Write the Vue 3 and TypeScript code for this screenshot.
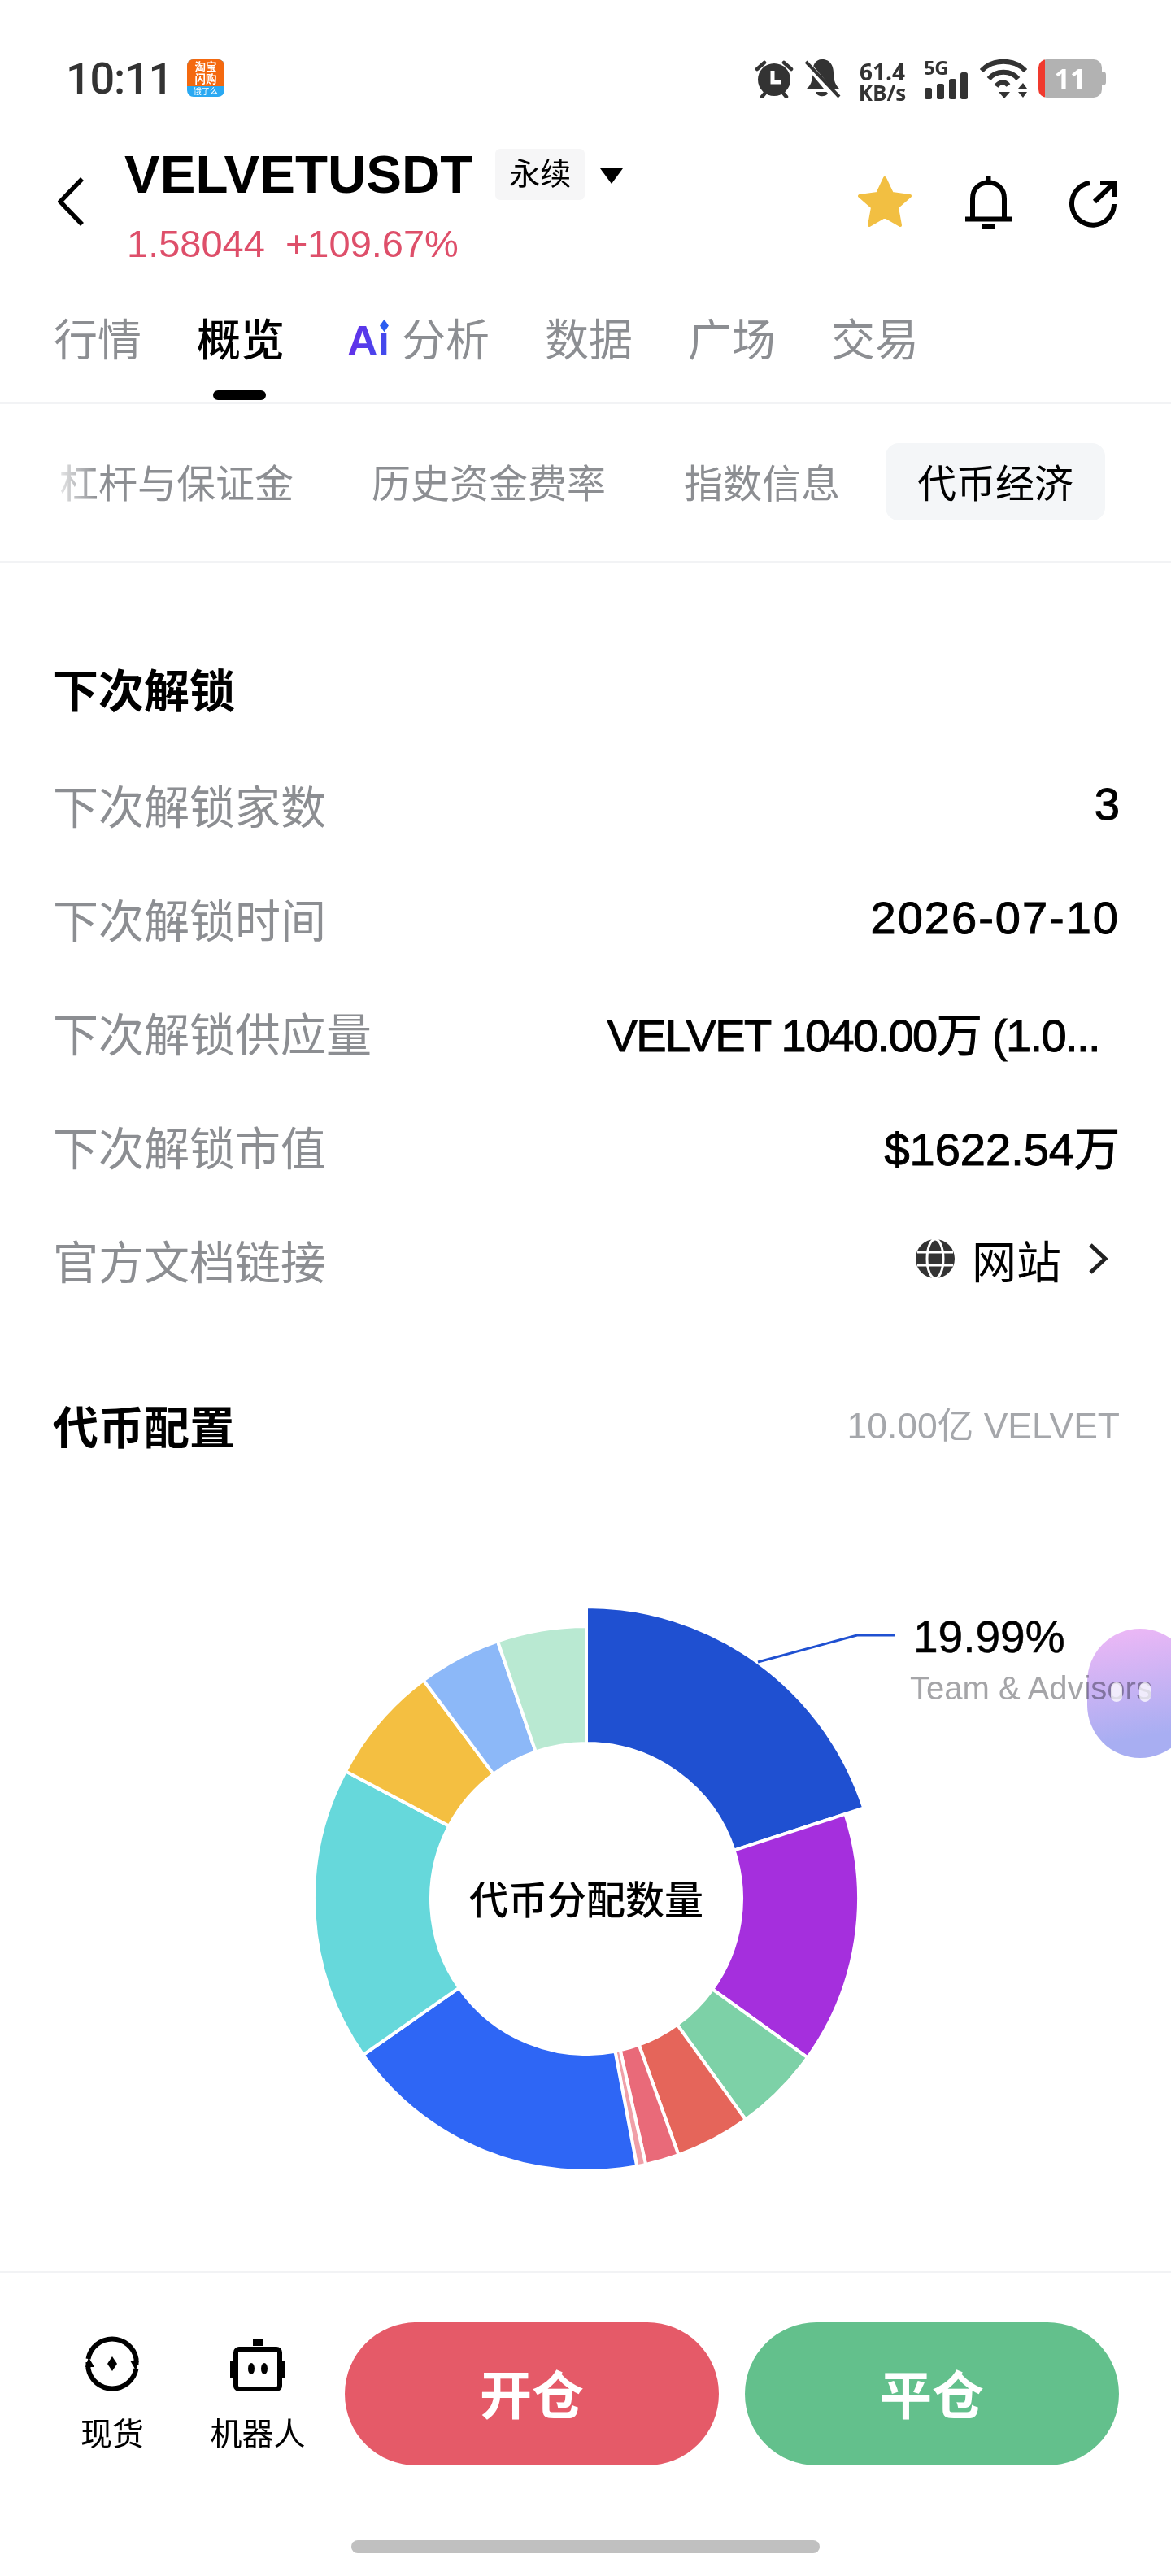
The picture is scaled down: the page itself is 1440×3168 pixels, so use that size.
<template>
  <div class="page">
    <div class="status">
      <span class="clock">10:11</span>
      <div class="app-badge">
        <div class="badge-top">淘宝<br />闪购</div>
        <div class="badge-bottom">饿了么</div>
      </div>
      <div class="status-right">
        <svg class="ic-alarm" width="48" height="48" viewBox="0 0 48 48">
          <circle cx="24" cy="25" r="20" fill="#333" />
          <path d="M3 12 L12 4 M45 12 L36 4 M9 46 L14 40 M39 46 L34 40" stroke="#333" stroke-width="4.5" stroke-linecap="round" />
          <path d="M22 14 V28 H32" fill="none" stroke="#fff" stroke-width="5" />
        </svg>
        <svg class="ic-mute" width="44" height="48" viewBox="0 0 44 48">
          <path d="M21 0 C31 0 35 8 35 17 C35 27 38 32 42 36 L2 36 C7 32 9 27 9 17 C9 8 12 0 21 0 Z" fill="#333" />
          <path d="M13 40 H29 C27 47 15 47 13 40 Z" fill="#333" />
          <path d="M-2 0 L40 50" stroke="#fff" stroke-width="8" />
          <path d="M1 3 L42 46" stroke="#333" stroke-width="4" />
        </svg>
        <div class="speed"><span>61.4</span><span class="unit">KB/s</span></div>
        <div class="net">
          <span class="five-g">5G</span>
          <svg width="54" height="34" viewBox="0 0 54 34">
            <rect x="1" y="19" width="9" height="14" rx="2.5" fill="#333" />
            <rect x="16" y="14" width="9" height="19" rx="2.5" fill="#333" />
            <rect x="31" y="8" width="9" height="25" rx="2.5" fill="#333" />
            <rect x="45" y="0" width="9" height="33" rx="2.5" fill="#333" />
          </svg>
        </div>
        <svg class="ic-wifi" width="58" height="48" viewBox="0 0 58 48">
          <path d="M2 14 C16 -1 42 -1 56 14" fill="none" stroke="#333" stroke-width="6" />
          <path d="M11 24 C20 13 38 13 47 24" fill="none" stroke="#333" stroke-width="6" />
          <path d="M20 33 C24 27 31 27 35 32" fill="none" stroke="#333" stroke-width="6" />
          <path d="M23 40 H37 L30 48 Z M47 36 L53 29 L58 36 Z M47 40 H58 L53 47 Z" fill="#333" />
        </svg>
        <div class="battery">
          <span>11</span>
        </div>
      </div>
    </div>

    <div class="header">
      <svg class="back" width="32" height="60" viewBox="0 0 32 60">
        <path d="M30 2 L3 30 L30 58" fill="none" stroke="#000" stroke-width="5.5" />
      </svg>
      <div class="symbol">
        <div class="symbol-top">
          <span class="pair">VELVETUSDT</span>
          <span class="perp">永续</span>
          <span class="caret"></span>
        </div>
        <div class="quote"><span>1.58044</span><span>+109.67%</span></div>
      </div>
      <div class="actions">
        <svg width="68" height="64" viewBox="0 0 68 64">
          <path d="M34 3 L43 22 L65 25 L49 39 L53 61 L34 50 L15 61 L19 39 L3 25 L25 22 Z" fill="#f2bf42" stroke="#f2bf42" stroke-width="4" stroke-linejoin="round" />
        </svg>
        <svg width="57" height="66" viewBox="0 0 57 66">
          <path d="M28.5 0 V8 M9 53 V28 C9 2 48 2 48 28 V53 M0 53.5 H57" fill="none" stroke="#000" stroke-width="6" />
          <rect x="20" y="60" width="17" height="6" fill="#000" />
        </svg>
        <svg class="share" width="58" height="58" viewBox="0 0 58 58">
          <path d="M25 3 A26 26 0 1 0 55 29" fill="none" stroke="#000" stroke-width="6" />
          <path d="M31 26 L54 4 M38 3 H55 V20" fill="none" stroke="#000" stroke-width="6" />
        </svg>
      </div>
    </div>

    <div class="tabs">
      <span
        v-for="tab in mainTabs"
        :key="tab.label"
        class="tab"
        :class="{ active: tab.active, 'has-ai': tab.ai }"
      >
        <span v-if="tab.ai" class="ai">Aı<i class="ai-dot"></i></span>{{ tab.label }}
        <i v-if="tab.active" class="tab-line"></i>
      </span>
    </div>

    <div class="subtabs">
      <span
        v-for="tab in subTabs"
        :key="tab"
        class="subtab"
        :class="{ current: tab === '代币经济' }"
      >{{ tab }}</span>
      <i class="fade"></i>
    </div>

    <div class="content">
      <div class="section-title first">下次解锁</div>
      <div v-for="row in rows" :key="row.label" class="row">
        <span class="row-label">{{ row.label }}</span>
        <span class="row-value" :class="row.cls">{{ row.value }}</span>
      </div>
      <div class="row">
        <span class="row-label">官方文档链接</span>
        <span class="link">
          <svg width="48" height="48" viewBox="0 0 48 48">
            <circle cx="24" cy="24" r="24" fill="#333" />
            <ellipse cx="24" cy="24" rx="10" ry="24" fill="none" stroke="#fff" stroke-width="3" />
            <path d="M2 16 H46 M2 32 H46" stroke="#fff" stroke-width="3" />
          </svg>
          <span class="link-text">网站</span>
          <svg width="26" height="38" viewBox="0 0 26 38">
            <path d="M4 2 L22 19 L4 36" fill="none" stroke="#222" stroke-width="5" />
          </svg>
        </span>
      </div>

      <div class="alloc-head">
        <span class="section-title">代币配置</span>
        <span class="total">10.00亿 VELVET</span>
      </div>

      <div class="chart">
        <svg width="1440" height="800" viewBox="0 0 1440 800">
          <path
            v-for="seg in segments"
            :key="seg.color"
            :d="seg.d"
            :fill="seg.color"
            stroke="#fff"
            stroke-width="4"
          />
          <path d="M932 146 L1054 113 H1101" fill="none" stroke="#1f50d1" stroke-width="3" />
        </svg>
        <div class="center-label">代币分配数量</div>
        <div class="callout">
          <div class="callout-num">19.99%</div>
          <div class="callout-name">Team &amp; Advisors</div>
        </div>
        <div class="bubble"></div>
        <i class="bubble-dot"></i>
        <i class="bubble-dot second"></i>
      </div>
    </div>

    <div class="footer">
      <div class="footer-main">
        <div class="mini">
          <svg width="68" height="68" viewBox="0 0 68 68">
            <path d="M4.5 28 A30 30 0 0 1 63.5 28 V36" fill="none" stroke="#000" stroke-width="6" />
            <path d="M63.5 40 A30 30 0 0 1 4.5 40 V32" fill="none" stroke="#000" stroke-width="6" />
            <path d="M56 30 L67 30 L63 42 Z M12 38 L1 38 L5 26 Z" fill="#000" />
            <path d="M34 25 L40 34 L34 43 L28 34 Z" fill="#000" />
          </svg>
          <span>现货</span>
        </div>
        <div class="mini">
          <svg width="68" height="68" viewBox="0 0 68 68">
            <rect x="28" y="3" width="13" height="9" fill="#000" />
            <rect x="7" y="16" width="54" height="49" rx="4" fill="none" stroke="#000" stroke-width="6" />
            <path d="M2 31 V51 M66 31 V51" stroke="#000" stroke-width="4" />
            <ellipse cx="26" cy="40" rx="4" ry="7" fill="#000" />
            <ellipse cx="42" cy="40" rx="4" ry="7" fill="#000" />
          </svg>
          <span>机器人</span>
        </div>
        <button class="trade open">开仓</button>
        <button class="trade close">平仓</button>
      </div>
      <div class="home-bar"></div>
    </div>
  </div>
</template>

<script setup lang="ts">
import { computed } from 'vue';

const mainTabs = [
  { label: '行情' },
  { label: '概览', active: true },
  { label: '分析', ai: true },
  { label: '数据' },
  { label: '广场' },
  { label: '交易' },
];

const subTabs = ['杠杆与保证金', '历史资金费率', '指数信息', '代币经济'];

const rows = [
  { label: '下次解锁家数', value: '3' },
  { label: '下次解锁时间', value: '2026-07-10', cls: 'wide' },
  { label: '下次解锁供应量', value: 'VELVET 1040.00万 (1.0...', cls: 'cut' },
  { label: '下次解锁市值', value: '$1622.54万' },
];

// end angle in degrees, clockwise from 12 o'clock
const slices = [
  { end: 71.9, color: '#1f50d1', big: true },
  { end: 125.7, color: '#a52fdd' },
  { end: 144.2, color: '#7dd1a7' },
  { end: 160.2, color: '#e5655a' },
  { end: 167.4, color: '#e96a79' },
  { end: 169.3, color: '#f0a0a8' },
  { end: 235, color: '#2e66f5' },
  { end: 297.9, color: '#66d8db' },
  { end: 323.3, color: '#f4bf41' },
  { end: 341, color: '#8cb8f8' },
  { end: 360, color: '#b9e9d2' },
];

const cx = 721;
const cy = 437;

function point(r: number, deg: number): string {
  const a = (deg * Math.PI) / 180;
  return `${(cx + r * Math.sin(a)).toFixed(2)} ${(cy - r * Math.cos(a)).toFixed(2)}`;
}

const segments = computed(() => {
  let start = 0;
  return slices.map((s) => {
    const outer = s.big ? 359 : 335;
    const inner = 191;
    const large = s.end - start > 180 ? 1 : 0;
    const d =
      `M${point(inner, start)} L${point(outer, start)} ` +
      `A${outer} ${outer} 0 ${large} 1 ${point(outer, s.end)} ` +
      `L${point(inner, s.end)} A${inner} ${inner} 0 ${large} 0 ${point(inner, start)} Z`;
    start = s.end;
    return { d, color: s.color };
  });
});
</script>

<style>
html,
body {
  margin: 0;
  background: #fff;
}
</style>

<style scoped>
.page {
  width: 1440px;
  height: 3168px;
  display: flex;
  flex-direction: column;
  overflow: hidden;
  background: #fff;
  font-family: "Liberation Sans", "Noto Sans CJK SC", sans-serif;
  color: #000;
}

.status {
  height: 145px;
  flex: none;
  display: flex;
  align-items: flex-start;
  padding: 73px 85px 0 81px;
  box-sizing: border-box;
  color: #333;
}

.clock {
  font-family: Roboto, sans-serif;
  font-weight: 500;
  font-size: 54px;
  line-height: 48px;
  letter-spacing: -1.2px;
}

.app-badge {
  margin-left: 18px;
  width: 46px;
  height: 46px;
  border-radius: 8px;
  overflow: hidden;
  background: #2aa9f2;
  color: #fff;
  text-align: center;
}

.badge-top {
  height: 33px;
  background: #f4690f;
  font-size: 13.5px;
  line-height: 15px;
  font-weight: 700;
  padding-top: 2px;
  box-sizing: border-box;
}

.badge-bottom {
  font-size: 10px;
  line-height: 13px;
}

.status-right {
  margin-left: auto;
  display: flex;
  align-items: flex-start;
}

.ic-mute {
  margin-left: 14px;
  overflow: hidden;
}

.speed {
  margin-left: 22px;
  width: 58px;
  display: flex;
  flex-direction: column;
  align-items: center;
  font-family: "Open Sans", sans-serif;
  font-weight: 700;
  font-size: 28px;
  line-height: 30px;
}

.speed .unit {
  font-size: 26px;
  line-height: 22px;
  font-weight: 700;
}

.net {
  margin-left: 22px;
  width: 54px;
  position: relative;
  height: 50px;
}

.five-g {
  display: block;
  font-family: "Open Sans", sans-serif;
  font-weight: 700;
  font-size: 24px;
  line-height: 22px;
  margin-top: -1px;
  letter-spacing: -0.5px;
}

.net svg {
  position: absolute;
  left: 0;
  top: 16px;
}

.ic-wifi {
  margin-left: 15px;
}

.battery {
  margin-left: 14px;
  width: 78px;
  height: 47px;
  border-radius: 10px;
  background: linear-gradient(90deg, #f03a2e 8px, #b2b2b2 8px);
  position: relative;
  color: #fff;
  font-family: "Open Sans", sans-serif;
  font-weight: 700;
  font-size: 34px;
  line-height: 47px;
  text-align: center;
}

.battery::after {
  content: "";
  position: absolute;
  right: -5px;
  top: 15px;
  width: 5px;
  height: 17px;
  border-radius: 0 4px 4px 0;
  background: #b2b2b2;
}

.header {
  height: 190px;
  flex: none;
  display: flex;
  align-items: flex-start;
  padding: 38px 67px 0 71px;
  box-sizing: border-box;
}

.back {
  margin-top: 35px;
  flex: none;
}

.symbol {
  margin-left: 49px;
}

.symbol-top {
  display: flex;
  align-items: flex-start;
}

.pair {
  font-weight: 700;
  font-size: 65.5px;
  line-height: 64px;
  margin-left: 1px;
}

.perp {
  margin-left: 28px;
  width: 110px;
  height: 63px;
  background: #f6f6f7;
  border-radius: 6px;
  font-size: 38px;
  line-height: 63px;
  text-align: center;
}

.caret {
  margin: 24px 0 0 19px;
  width: 0;
  height: 0;
  border-left: 14px solid transparent;
  border-right: 14px solid transparent;
  border-top: 19px solid #000;
}

.quote {
  margin-top: 28px;
  margin-left: 4px;
  display: flex;
  gap: 25px;
  font-size: 47px;
  line-height: 50px;
  color: #de4f6a;
}

.actions {
  margin-left: auto;
  margin-top: 33px;
  display: flex;
  align-items: flex-start;
  gap: 65px;
}

.share {
  margin: 6px 0 0 6px;
}

.tabs {
  height: 162px;
  flex: none;
  display: flex;
  gap: 68px;
  padding: 51px 0 0 66px;
  box-sizing: border-box;
  border-bottom: 2px solid #f2f3f5;
  font-size: 54px;
  line-height: 66px;
  color: #8c8e92;
}

.tab {
  position: relative;
  white-space: nowrap;
  display: flex;
}

.tab.active {
  color: #000;
  font-weight: 500;
}

.tab.has-ai {
  margin-left: 9px;
}

.tab-line {
  position: absolute;
  left: 20px;
  top: 94px;
  width: 65px;
  height: 12px;
  border-radius: 6px;
  background: #000;
}

.ai {
  position: relative;
  width: 67px;
  font-size: 52px;
  font-weight: 700;
  color: transparent;
  background: linear-gradient(100deg, #6a2be8, #2a5cf0);
  -webkit-background-clip: text;
  background-clip: text;
}

.ai-dot {
  position: absolute;
  left: 40px;
  top: 9px;
  width: 11px;
  height: 11px;
  background: #2a5cf0;
  transform: scaleX(0.7) rotate(45deg);
}

.subtabs {
  height: 195px;
  flex: none;
  position: relative;
  display: flex;
  align-items: flex-start;
  gap: 16px;
  padding: 48px 0 0 33px;
  box-sizing: border-box;
  border-bottom: 2px solid #f2f3f5;
  font-size: 48px;
  color: #8c8e92;
}

.subtab {
  height: 95px;
  line-height: 101px;
  padding: 0 40px;
  border-radius: 16px;
  white-space: nowrap;
}

.subtab.current {
  padding: 0 39px;
  background: #f4f6f8;
  color: #000;
}

.fade {
  position: absolute;
  left: 40px;
  top: 40px;
  width: 80px;
  height: 110px;
  background: linear-gradient(90deg, #fff 25%, rgba(255, 255, 255, 0));
}

.content {
  flex: 1;
  min-height: 0;
  padding: 0 63px 0 65px;
}

.section-title {
  font-size: 56px;
  line-height: 70px;
  font-weight: 700;
}

.section-title.first {
  padding-top: 124px;
  margin-bottom: 32px;
}

.row {
  height: 140px;
  display: flex;
  align-items: center;
  justify-content: space-between;
}

.row-label {
  font-size: 56px;
  color: #8c8e92;
}

.row-value {
  font-size: 56px;
  -webkit-text-stroke: 1px #000;
  white-space: nowrap;
}

.row-value.wide {
  letter-spacing: 2px;
}

.row-value.cut {
  margin-right: 25px;
  letter-spacing: -1.6px;
}

.link {
  display: flex;
  align-items: center;
}

.link-text {
  margin-left: 21px;
  font-size: 55px;
}

.link svg:first-child {
  margin-left: 2px;
}

.link svg:last-child {
  margin-left: 32px;
  margin-right: 14px;
}

.alloc-head {
  margin-top: 104px;
  height: 70px;
  display: flex;
  align-items: center;
  justify-content: space-between;
}

.total {
  margin-bottom: 16px;
  font-size: 44.5px;
  color: #a5a7ab;
}

.chart {
  position: relative;
  width: 1440px;
  height: 800px;
  margin: 106px 0 0 -65px;
}

.center-label {
  position: absolute;
  left: 521px;
  width: 400px;
  top: 408px;
  text-align: center;
  font-size: 48px;
  line-height: 64px;
  font-weight: 500;
}

.callout {
  position: absolute;
  left: 1119px;
  top: 88px;
  white-space: nowrap;
}

.callout-num {
  margin-left: 4px;
  font-size: 55px;
  line-height: 54px;
  -webkit-text-stroke: 0.5px #000;
}

.callout-name {
  margin-top: 12px;
  font-size: 40px;
  line-height: 48px;
  color: #a5a5a8;
}

.bubble {
  position: absolute;
  left: 1337px;
  top: 105px;
  width: 130px;
  height: 159px;
  border-radius: 80px;
  background: linear-gradient(170deg, #f0b8f6, #a8aef2 80%);
  mix-blend-mode: multiply;
}

.bubble-dot {
  position: absolute;
  top: 171px;
  left: 1366px;
  width: 14px;
  height: 24px;
  border-radius: 7px;
  background: #fff;
  opacity: 0.75;
}

.bubble-dot.second {
  left: 1401px;
}

.footer {
  height: 375px;
  flex: none;
  box-sizing: border-box;
  border-top: 2px solid #f2f3f5;
}

.footer-main {
  display: flex;
  align-items: flex-start;
  padding: 61px 65px 0 73px;
  height: 176px;
}

.mini {
  width: 130px;
  flex: none;
  margin-right: 49px;
  display: flex;
  flex-direction: column;
  align-items: center;
  font-size: 39px;
  padding-top: 17px;
}

.mini svg {
  height: 68px;
  margin-bottom: 28px;
}

.mini span {
  line-height: 50px;
  white-space: nowrap;
}

.mini + .mini {
  margin-right: 42px;
}

.trade {
  flex: none;
  width: 460px;
  height: 176px;
  border: 0;
  border-radius: 88px;
  padding: 0 0 6px;
  color: #fff;
  font-family: inherit;
  font-size: 64px;
  font-weight: 700;
}

.open {
  background: #e55a68;
}

.close {
  margin-left: 32px;
  background: #63c08c;
}

.home-bar {
  margin: 92px auto 0;
  width: 576px;
  height: 16px;
  border-radius: 8px;
  background: #c0c0c0;
}
</style>
